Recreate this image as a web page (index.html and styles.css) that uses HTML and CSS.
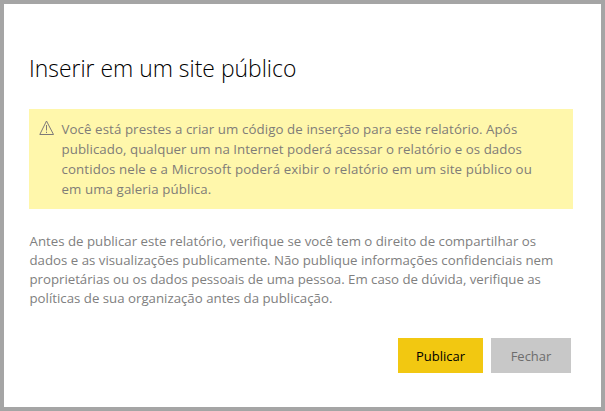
FILE: index.html
```html
<!DOCTYPE html>
<html lang="pt-BR">
<head>
<meta charset="utf-8">
<title>Inserir em um site público</title>
<link rel="stylesheet" href="styles.css">
</head>
<body>
<main class="dialog">
  <h1 class="title">Inserir em um site público</h1>
  <section class="alert">
    <svg class="alert-icon" viewBox="0 0 16 16" width="16" height="16" fill="none" stroke="#7d7979" stroke-width="1">
      <path d="M7.5 1 L0.8 14.5 H14.5 Z"/>
      <path d="M7.5 5 V10.5 M7.5 11.7 V13"/>
    </svg>
    <p class="alert-text">
      <span class="line a1">Você está prestes a criar um código de inserção para este relatório. Após</span>
      <span class="line a2">publicado, qualquer um na Internet poderá acessar o relatório e os dados</span>
      <span class="line a3">contidos nele e a Microsoft poderá exibir o relatório em um site público ou</span>
      <span class="line a4">em uma galeria pública.</span>
    </p>
  </section>
  <p class="notice">
    <span class="line n1">Antes de publicar este relatório, verifique se você tem o direito de compartilhar os</span>
    <span class="line n2">dados e as visualizações publicamente. Não publique informações confidenciais nem</span>
    <span class="line n3">proprietárias ou os dados pessoais de uma pessoa. Em caso de dúvida, verifique as</span>
    <span class="line n4">políticas de sua organização antes da publicação.</span>
  </p>
  <div class="actions">
    <button class="button primary">Publicar</button>
    <button class="button secondary">Fechar</button>
  </div>
</main>
</body>
</html>
```
FILE: styles.css
```css
* { box-sizing: border-box; }
body { margin: 0; font-family: "Open Sans", "Noto Sans", sans-serif; }
.dialog {
  width: 605px;
  height: 411px;
  padding: 50px 28px 0 25px;
  border: 4px solid #a5a5a5;
  background: #fff;
}
.title {
  margin: 0;
  height: 55px;
  font-size: 22.9px;
  font-weight: 300;
  line-height: 30px;
  color: #000;
  white-space: nowrap;
}
.alert {
  display: flex;
  width: 544px;
  height: 100px;
  padding: 10px 0 0 10px;
  background: #fff7ab;
}
.alert-icon { flex: none; margin-top: 1px; }
.alert-text {
  margin: 0 0 0 6.5px;
  font-size: 13.3px;
  line-height: 20px;
  color: #7f7d78;
}
.line { display: block; width: max-content; white-space: nowrap; }
.a1 { letter-spacing: 0.08px; }
.a2 { letter-spacing: 0.05px; }
.a3 { letter-spacing: 0.11px; }
.a4 { letter-spacing: 0.08px; }
.notice {
  margin: 23px 0 0;
  padding-left: 0.5px;
  font-size: 13.25px;
  line-height: 19px;
  color: #808080;
}
.n3 { letter-spacing: -0.02px; }
.actions { display: flex; gap: 8px; margin-top: 30px; padding-left: 369px; }
.button {
  height: 35px;
  padding: 1px 0 0;
  border: 0;
  font-family: inherit;
  font-size: 13px;
  line-height: 34px;
}
.primary { width: 85px; background: #f2c811; color: #000; }
.secondary { width: 80px; background: #c8c8c8; color: #6d6d6d; }
```
